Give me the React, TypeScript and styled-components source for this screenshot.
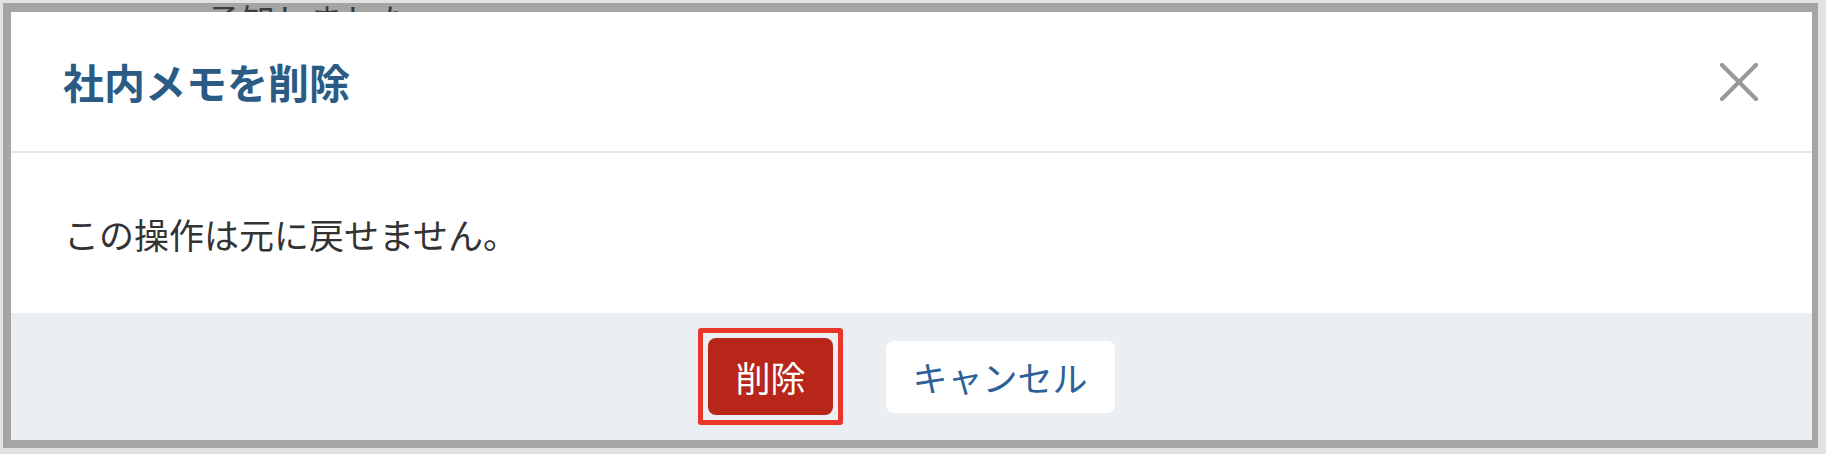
import React from 'react'
import styled, { createGlobalStyle } from 'styled-components'

const GlobalStyle = createGlobalStyle`
  html, body {
    margin: 0;
    padding: 0;
    background: #e2e2e2;
  }
  body {
    font-family: "Noto Sans CJK JP", "Noto Sans", sans-serif;
  }
  * {
    box-sizing: border-box;
  }
`

export default function App() {
  return (
    <>
      <GlobalStyle />
      <Frame>
        <Backdrop>
          {/* page content peeking out from behind the dialog */}
          <BehindText>
            <span>承知しました</span>
          </BehindText>
          <Modal role="dialog">
            <Header>
              <Title>社内メモを削除</Title>
              <CloseButton aria-label="閉じる">
                <svg width="38" height="38" viewBox="0 0 38 38">
                  <path d="M2 2 L36 36 M36 2 L2 36" stroke="#999" strokeWidth="4.2" strokeLinecap="square" fill="none" />
                </svg>
              </CloseButton>
            </Header>
            <Body>この操作は元に戻せません。</Body>
            <Footer>
              <Highlight>
                <Button $variant="danger">削除</Button>
              </Highlight>
              <Button $variant="plain">キャンセル</Button>
            </Footer>
          </Modal>
        </Backdrop>
      </Frame>
    </>
  )
}

const Frame = styled.div`
  height: 454px;
  padding: 3px 8px 6px 3px;
`

const Backdrop = styled.div`
  height: 100%;
  display: flex;
  flex-direction: column;
  background: #a5a5a5;
  padding: 0 6px 8px 8px;
`

const BehindText = styled.div`
  height: 9px;
  flex-shrink: 0;
  overflow: hidden;
  padding-left: 196px;
  font-size: 34px;
  line-height: 1;
  color: #3c3c3c;
  white-space: nowrap;
  span {
    display: block;
  }
`

const Modal = styled.div`
  flex: 1;
  display: flex;
  flex-direction: column;
  background: #fff;
`

const Header = styled.div`
  height: 141px;
  flex-shrink: 0;
  display: flex;
  align-items: center;
  justify-content: space-between;
  padding: 0 54px 0 52px;
  border-bottom: 2px solid #e6e6e6;
`

const Title = styled.h2`
  margin: 0;
  font-size: 41px;
  font-weight: 700;
  line-height: 1;
  color: #2b5a85;
`

const CloseButton = styled.button`
  display: flex;
  padding: 0;
  border: none;
  background: none;
  cursor: pointer;
`

const Body = styled.div`
  height: 160px;
  flex-shrink: 0;
  display: flex;
  align-items: center;
  padding-left: 53px;
  font-size: 35px;
  line-height: 1;
  color: #333;
`

const Footer = styled.div`
  flex: 1;
  display: flex;
  align-items: center;
  justify-content: center;
  gap: 53px;
  background: #ebeff3;
`

const Highlight = styled.span`
  position: relative;
  display: flex;
  &::after {
    content: '';
    position: absolute;
    inset: -10px;
    border: 5px solid #e8372a;
    border-radius: 3px;
    pointer-events: none;
  }
`

const Button = styled.button<{ $variant: 'danger' | 'plain' }>`
  font-family: inherit;
  font-size: 35px;
  line-height: 1;
  padding: 0 27px;
  border: none;
  border-radius: 8px;
  cursor: pointer;
  height: ${p => (p.$variant === 'danger' ? '77px' : '72px')};
  background: ${p => (p.$variant === 'danger' ? '#b8261a' : '#fff')};
  color: ${p => (p.$variant === 'danger' ? '#fff' : '#2d6096')};
`
